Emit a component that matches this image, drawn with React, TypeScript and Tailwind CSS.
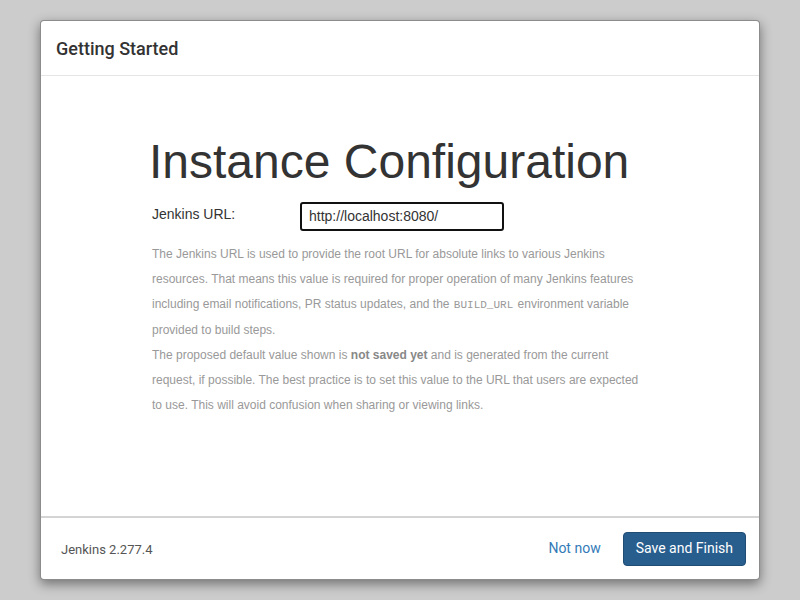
export default function App() {
  return (
    <div className="w-[800px] h-[600px] bg-[#cccccc] pt-[20px] pl-[40px]">
      <div className="w-[720px] h-[560px] bg-white rounded-[4px] border border-[rgba(0,0,0,0.45)] shadow-[0_4px_12px_rgba(0,0,0,0.45)] flex flex-col overflow-hidden">
        <div className="h-[55px] border-b border-[#e5e5e5] flex items-center pl-[15px] shrink-0">
          <h1 className="text-[18px] font-medium text-[#333] font-['Roboto',sans-serif]">Getting Started</h1>
        </div>
        <div className="flex-1 flex flex-col pl-[111px]">
          <div className="w-[500px] pt-[56px]">
            <h2 className="font-['Liberation_Sans',Arial,sans-serif] text-[48px] leading-[60px] text-[#333] -ml-[3px]">Instance Configuration</h2>
            <div className="flex items-center mt-[10px] font-['Liberation_Sans',Arial,sans-serif]">
              <label className="text-[14px] text-[#333] w-[148px] self-start mt-[2px]">Jenkins URL:</label>
              <div className="w-[204px] h-[29px] border-2 border-[#111] rounded-[3px] flex items-center pl-[7px] text-[14px] text-[#333]">http://localhost:8080/</div>
            </div>
            <div className="mt-[11px] font-['Liberation_Sans',Arial,sans-serif] text-[12px] leading-[25.2px] text-[#999] w-[492px]">
              <p>
                The Jenkins URL is used to provide the root URL for absolute links to various Jenkins resources. That means this value is required for proper operation of many Jenkins features including email notifications, PR status updates, and the <code className="font-['Liberation_Mono',monospace] text-[11px] leading-[0] px-[1px]">BUILD_URL</code> environment variable provided to build steps.
              </p>
              <p>
                The proposed default value shown is <strong className="font-bold text-[#888]">not saved yet</strong> and is generated from the current request, if possible. The best practice is to set this value to the URL that users are expected to use. This will avoid confusion when sharing or viewing links.
              </p>
            </div>
          </div>
        </div>
        <div className="h-[63px] border-t-2 border-[#d4d4d4] flex items-center justify-between pl-[20px] pr-[13px] shrink-0 font-['Roboto',sans-serif]">
          <span className="text-[13px] text-[#555] mt-[2px]">Jenkins 2.277.4</span>
          <div className="flex items-center gap-[10px]">
            <button className="text-[14px] text-[#337ab7] px-[12px] py-[6px]">Not now</button>
            <button className="h-[34px] px-[12px] rounded-[4px] bg-[#285e8e] border border-[#204d74] text-white text-[14px]">Save and Finish</button>
          </div>
        </div>
      </div>
    </div>
  );
}
